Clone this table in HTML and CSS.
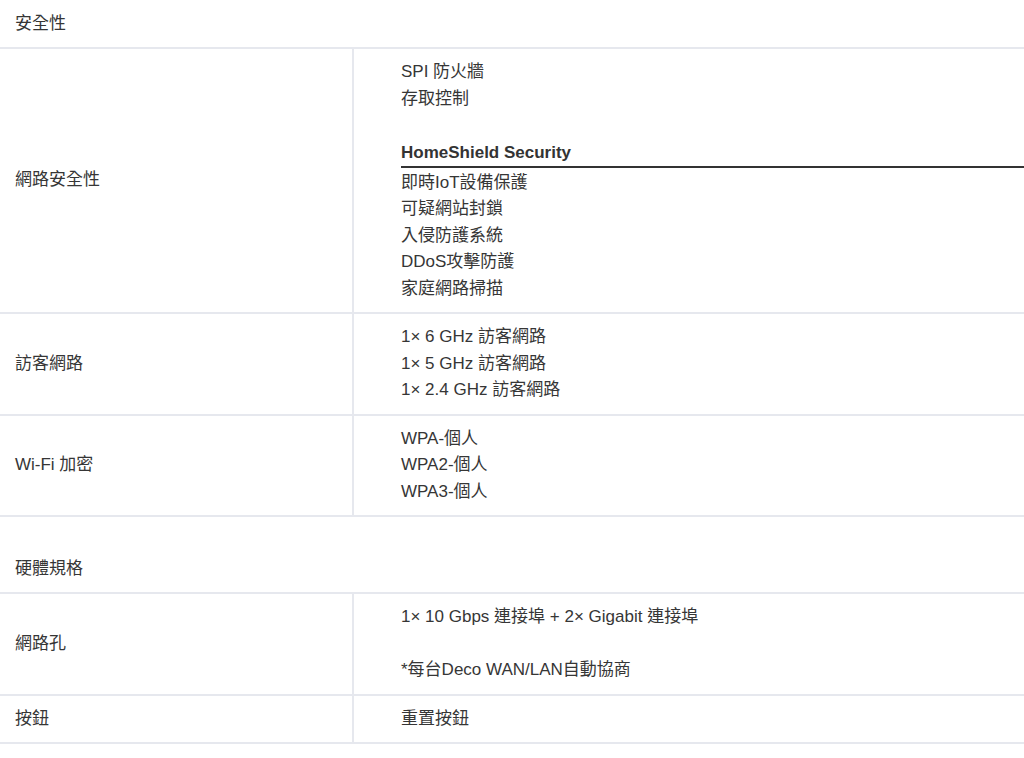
FILE: index.html
```html
<!DOCTYPE html>
<html lang="zh-Hant">
<head>
<meta charset="utf-8">
<title>規格</title>
<link rel="stylesheet" href="styles.css">
</head>
<body>
<div class="specs">
  <div class="section-title first">安全性</div>
  <div class="row">
    <div class="label">網路安全性</div>
    <div class="value">
      <div>SPI 防火牆</div>
      <div>存取控制</div>
      <div class="blank">&nbsp;</div>
      <div class="sub-title">HomeShield Security</div>
      <div>即時IoT設備保護</div>
      <div>可疑網站封鎖</div>
      <div>入侵防護系統</div>
      <div>DDoS攻擊防護</div>
      <div>家庭網路掃描</div>
    </div>
  </div>
  <div class="row">
    <div class="label">訪客網路</div>
    <div class="value">
      <div>1× 6 GHz 訪客網路</div>
      <div>1× 5 GHz 訪客網路</div>
      <div>1× 2.4 GHz 訪客網路</div>
    </div>
  </div>
  <div class="row">
    <div class="label">Wi-Fi 加密</div>
    <div class="value">
      <div>WPA-個人</div>
      <div>WPA2-個人</div>
      <div>WPA3-個人</div>
    </div>
  </div>
  <div class="section-title second">硬體規格</div>
  <div class="row">
    <div class="label">網路孔</div>
    <div class="value">
      <div>1× 10 Gbps 連接埠 + 2× Gigabit 連接埠</div>
      <div class="blank">&nbsp;</div>
      <div>*每台Deco WAN/LAN自動協商</div>
    </div>
  </div>
  <div class="row">
    <div class="label">按鈕</div>
    <div class="value">
      <div>重置按鈕</div>
    </div>
  </div>
</div>
</body>
</html>
```

FILE: styles.css
```css
html, body {
  margin: 0;
  padding: 0;
  background: #ffffff;
}

body {
  font-family: "Liberation Sans", "Noto Sans CJK TC", sans-serif;
  font-size: 17px;
  color: #363636;
}

.specs {
  width: 1024px;
}

.section-title {
  padding: 10px 15px;
  line-height: 27px;
  border-bottom: 2px solid #e6e8ee;
}

.section-title.second {
  margin-top: 28px;
}

.row {
  display: flex;
  border-bottom: 2px solid #e6e8ee;
}

.label {
  width: 337px;
  padding-left: 15px;
  border-right: 2px solid #e6e8ee;
  display: flex;
  align-items: center;
  line-height: 26.5px;
}

.value {
  flex: 1;
  padding: 10px 0 10px 47px;
  line-height: 26.5px;
}

.sub-title {
  font-weight: 600;
  color: #333333;
  line-height: 27px;
  border-bottom: 2px solid #333333;
  margin-bottom: 2px;
}
```
